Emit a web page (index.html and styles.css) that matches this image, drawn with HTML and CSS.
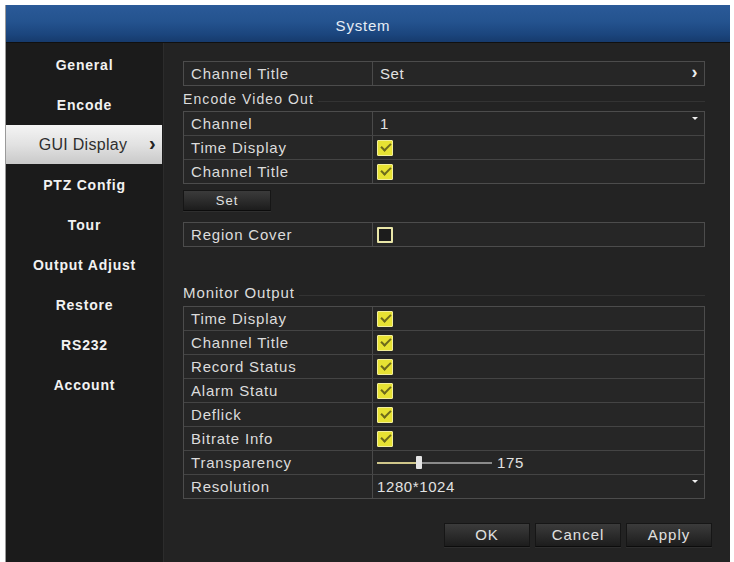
FILE: index.html
```html
<!DOCTYPE html>
<html>
<head>
<meta charset="utf-8">
<link rel="stylesheet" href="styles.css">
</head>
<body>
<div class="window">
  <div class="titlebar">System</div>
  <div class="main">
    <nav class="sidebar">
      <div class="nav-item">General</div>
      <div class="nav-item">Encode</div>
      <div class="nav-item active">GUI Display<span class="chev">&#x203A;</span></div>
      <div class="nav-item">PTZ Config</div>
      <div class="nav-item">Tour</div>
      <div class="nav-item">Output Adjust</div>
      <div class="nav-item">Restore</div>
      <div class="nav-item">RS232</div>
      <div class="nav-item">Account</div>
    </nav>
    <section class="content">
      <div class="table t-first">
        <div class="row"><div class="lbl">Channel Title</div><div class="val">Set<span class="arrow-r">&#x203A;</span></div></div>
      </div>

      <div class="group-label g-encode">Encode Video Out</div>
      <div class="table">
        <div class="row"><div class="lbl">Channel</div><div class="val">1<span class="drop"></span></div></div>
        <div class="row"><div class="lbl">Time Display</div><div class="val"><span class="cb on"></span></div></div>
        <div class="row"><div class="lbl">Channel Title</div><div class="val"><span class="cb on"></span></div></div>
      </div>

      <div class="btn btn-set">Set</div>

      <div class="table t-region">
        <div class="row"><div class="lbl">Region Cover</div><div class="val"><span class="cb off"></span></div></div>
      </div>

      <div class="group-label g-monitor">Monitor Output</div>
      <div class="table">
        <div class="row"><div class="lbl">Time Display</div><div class="val"><span class="cb on"></span></div></div>
        <div class="row"><div class="lbl">Channel Title</div><div class="val"><span class="cb on"></span></div></div>
        <div class="row"><div class="lbl">Record Status</div><div class="val"><span class="cb on"></span></div></div>
        <div class="row"><div class="lbl">Alarm Statu</div><div class="val"><span class="cb on"></span></div></div>
        <div class="row"><div class="lbl">Deflick</div><div class="val"><span class="cb on"></span></div></div>
        <div class="row"><div class="lbl">Bitrate Info</div><div class="val"><span class="cb on"></span></div></div>
        <div class="row"><div class="lbl">Transparency</div><div class="val">
          <div class="slider"><div class="fill"></div><div class="knob"></div></div><span class="slider-val">175</span>
        </div></div>
        <div class="row"><div class="lbl">Resolution</div><div class="val v-res">1280*1024<span class="drop"></span></div></div>
      </div>

      <div class="actions">
        <div class="btn">OK</div>
        <div class="btn">Cancel</div>
        <div class="btn">Apply</div>
      </div>
    </section>
  </div>
</div>
</body>
</html>
```
FILE: styles.css
```css
html, body {
  margin: 0;
  padding: 0;
  background: #ffffff;
}
body {
  padding: 5px 4px 0 5px;
  font-family: "Liberation Sans", Arial, sans-serif;
  font-size: 14px;
}
.window {
  width: 724px;
  height: 557px;
  border-left: 1px solid #9a9a9a;
  display: flex;
  flex-direction: column;
  background: #222;
}
.titlebar {
  height: 34px;
  padding: 3px 10px 0 0;
  line-height: 36px;
  text-align: center;
  color: #e6edf5;
  font-size: 15px;
  letter-spacing: 0.8px;
  background: linear-gradient(#2b5a98 0%, #24538f 45%, #1b457d 80%, #163a6c 100%);
  border-bottom: 1px solid #101010;
}
.main {
  flex: 1;
  display: flex;
}
.sidebar {
  width: 157px;
  padding-top: 2px;
  background: #1b1b1b;
  border-right: 1px solid #2c2c2c;
  display: flex;
  flex-direction: column;
}
.nav-item {
  height: 40px;
  line-height: 40px;
  text-align: center;
  color: #f2f2f2;
  font-weight: bold;
  font-size: 14px;
  letter-spacing: 0.8px;
  position: relative;
}
.nav-item.active {
  height: 39px;
  line-height: 39px;
  margin-bottom: 1px;
  background: linear-gradient(#f4f4f4 0%, #e2e2e2 50%, #c9c9c9 100%);
  color: #2e2e2e;
  font-weight: normal;
  font-size: 16px;
  letter-spacing: 0.3px;
  padding-right: 2px;
  margin-right: 1px;
}
.nav-item .chev {
  position: absolute;
  left: 143px;
  top: -1px;
  font-weight: bold;
  font-size: 20px;
  color: #222;
}
.content {
  flex: 1;
  padding: 18px 25px 0 19px;
  background: #232323;
}
.table {
  border: 1px solid #4c4c4c;
  background: #262626;
}
.row {
  display: flex;
  height: 23px;
  border-top: 1px solid #444;
}
.row:first-child {
  border-top: none;
}
.lbl {
  width: 181px;
  padding-left: 7px;
  line-height: 23px;
  font-size: 15px;
  letter-spacing: 0.8px;
  color: #dcdcdc;
  border-right: 1px solid #4a4a4a;
}
.val {
  flex: 1;
  display: flex;
  align-items: center;
  padding-left: 7px;
  font-size: 15px;
  letter-spacing: 0.6px;
  color: #e2e2e2;
  position: relative;
}
.v-res {
  padding-left: 4px;
}
.arrow-r {
  position: absolute;
  right: 6px;
  top: 0;
  line-height: 21px;
  font-size: 18px;
  font-weight: bold;
  color: #eee;
}
.drop {
  position: absolute;
  right: 6px;
  top: 5px;
  width: 0;
  height: 0;
  border-left: 3px solid transparent;
  border-right: 3px solid transparent;
  border-top: 3px solid #f0f0f0;
}
.group-label {
  display: flex;
  align-items: center;
  color: #dcdcdc;
  font-size: 14px;
  letter-spacing: 1.1px;
}
.group-label::after {
  content: "";
  flex: 1;
  height: 1px;
  background: #333;
  margin: 6px 0 0 4px;
}
.g-encode {
  height: 25px;
}
.g-monitor {
  height: 28px;
  margin-top: 31px;
  font-size: 15px;
  letter-spacing: 0.9px;
}
.cb {
  width: 14px;
  height: 14px;
  margin-left: -3px;
  border: 1px solid #f3ef9a;
  border-radius: 1px;
  box-sizing: content-box;
  display: inline-block;
  position: relative;
}
.cb.on {
  background: #e7e233;
}
.cb.on::after {
  content: "";
  position: absolute;
  left: 3px;
  top: 2px;
  width: 8px;
  height: 4px;
  border-left: 2px solid #6d6a1c;
  border-bottom: 2px solid #6d6a1c;
  transform: rotate(-45deg);
}
.cb.off {
  background: #1c1c1c;
  border: 2px solid #e9e6a8;
  width: 12px;
  height: 12px;
}
.btn {
  width: 86px;
  height: 22px;
  line-height: 22px;
  text-align: center;
  color: #e0e0e0;
  font-size: 15px;
  letter-spacing: 1px;
  background: linear-gradient(#3b3b3b 0%, #2c2c2c 50%, #1c1c1c 100%);
  border: 1px solid #161616;
  border-bottom-color: #0c0c0c;
  box-shadow: 0 1px 0 #2e2e2e;
}
.btn-set {
  height: 19px;
  line-height: 19px;
  font-size: 13px;
  margin: 6px 0 0 0;
}
.t-region {
  margin-top: 11px;
}
.slider {
  width: 115px;
  height: 2px;
  background: #8a8a8a;
  position: relative;
  margin-left: -3px;
}
.slider .fill {
  width: 40px;
  height: 2px;
  background: #cfc68a;
}
.slider .knob {
  position: absolute;
  left: 39px;
  top: -6px;
  width: 6px;
  height: 13px;
  background: #e4e4e4;
  border-radius: 1px;
}
.slider-val {
  margin-left: 5px;
}
.actions {
  display: flex;
  justify-content: flex-end;
  gap: 5px;
  margin-top: 24px;
  margin-right: -7px;
}
.actions .btn {
  width: 84px;
}
```
